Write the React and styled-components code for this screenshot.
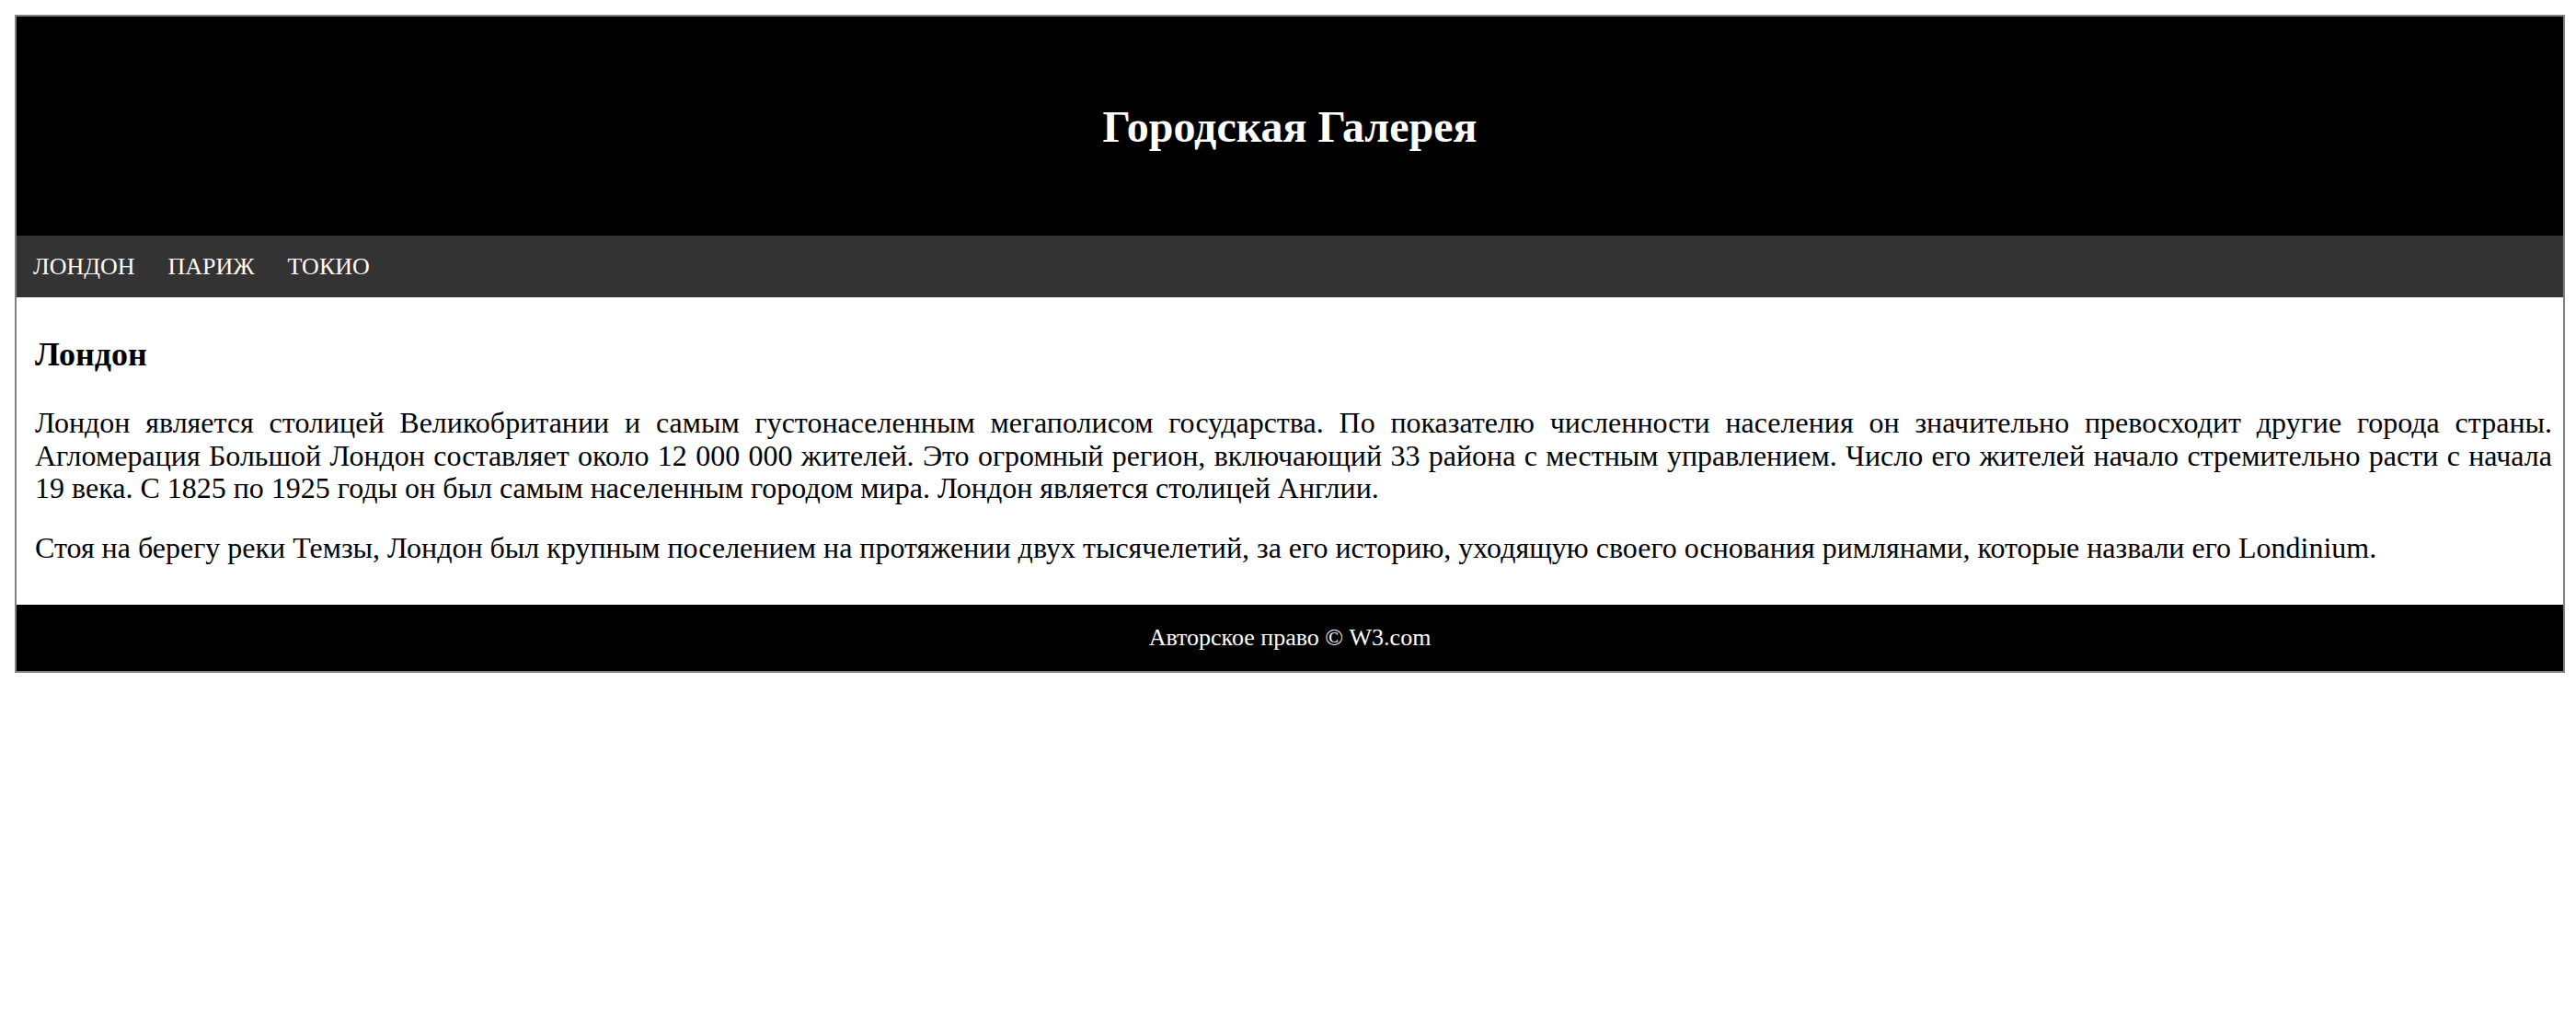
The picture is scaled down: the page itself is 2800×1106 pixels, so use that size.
import styled, { createGlobalStyle } from 'styled-components';

const GlobalStyle = createGlobalStyle`
	body {
		margin: 16px 12px 16px 16px;
		font-family: 'Liberation Serif', 'Times New Roman', serif;
		background: #fff;
		color: #000;
	}
`;

const Container = styled.div`
	border: 2px solid gray;
`;

const Header = styled.header`
	background-color: #000;
	color: #fff;
	text-align: center;
	padding: 92px 0 91px;

	& h1 {
		margin: 0;
		font-size: 48px;
		font-weight: bold;
	}
`;

const Nav = styled.nav`
	display: flex;
	background-color: #333;
	padding: 19px 0 18px;
`;

const NavLink = styled.a`
	padding: 0 18px;
	color: #fff;
	font-size: 26px;
	text-decoration: none;
	text-transform: uppercase;
`;

const Article = styled.article`
	padding: 41px 12px 44px 20px;

	& h3 {
		margin: 0 0 36px;
		font-size: 36px;
	}

	& p {
		margin: 0 0 29px;
		font-size: 32px;
		line-height: 35.5px;
		text-align: justify;
	}

	& p:last-child {
		margin-bottom: 0;
	}
`;

const Footer = styled.footer`
	background-color: #000;
	color: #fff;
	text-align: center;
	padding: 21px 0;
	font-size: 26px;
`;

const cities = ['Лондон', 'Париж', 'Токио'];

export default function App() {
	return (
		<>
			<GlobalStyle />
			<Container>
				<Header>
					<h1>Городская Галерея</h1>
				</Header>
				<Nav>
					{cities.map((city) => (
						<NavLink key={city} href="#">
							{city}
						</NavLink>
					))}
				</Nav>
				<Article>
					<h3>Лондон</h3>
					<p>
						Лондон является столицей Великобритании и самым густонаселенным
						мегаполисом государства. По показателю численности населения он
						значительно превосходит другие города страны. Агломерация Большой
						Лондон составляет около 12 000 000 жителей. Это огромный регион,
						включающий 33 района с местным управлением. Число его жителей
						начало стремительно расти с начала 19 века. С 1825 по 1925 годы он
						был самым населенным городом мира. Лондон является столицей Англии.
					</p>
					<p>
						Стоя на берегу реки Темзы, Лондон был крупным поселением на
						протяжении двух тысячелетий, за его историю, уходящую своего
						основания римлянами, которые назвали его Londinium.
					</p>
				</Article>
				<Footer>Авторское право © W3.com</Footer>
			</Container>
		</>
	);
}
